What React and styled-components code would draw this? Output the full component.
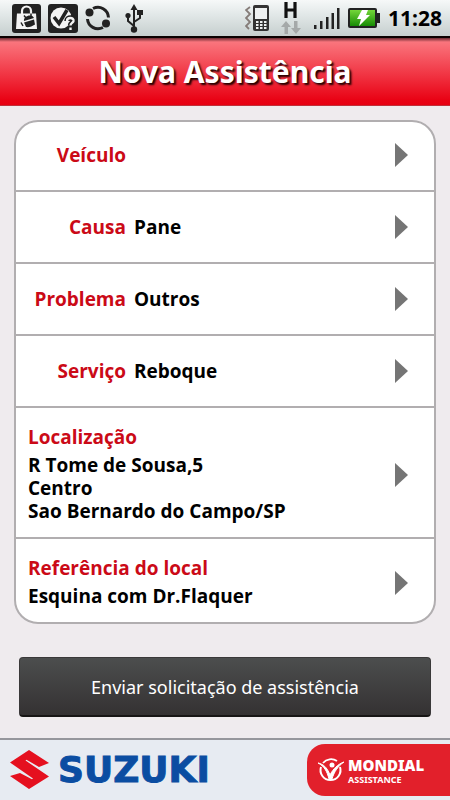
import React from "react";
import styled, {createGlobalStyle} from "styled-components";

const GlobalStyle = createGlobalStyle`
  * {
    box-sizing: border-box;
  }

  body {
    margin: 0;
    background: #EFEBEE;
    font-family: "Noto Sans", "Open Sans", sans-serif;
  }
`

const Screen = styled.div`
  min-height: 100vh;
  display: flex;
  flex-direction: column;
`
const StatusBar = styled.div`
  height: 38px;
  padding: 0 8px 0 12px;
  display: flex;
  align-items: center;
  justify-content: space-between;
  background: linear-gradient(#F6F8F8 0%, #E2E8E8 40%, #C6CFCE 100%);
  border-bottom: 2px solid #0A0000;
`
const StatusGroup = styled.div`
  display: flex;
  align-items: center;
  gap: ${({$gap}) => $gap}px;

  svg {
    display: block;
  }
`
const Clock = styled.time`
  font-size: 21px;
  line-height: 24px;
  font-weight: 700;
  color: #000;
`
const Header = styled.header`
  height: 68px;
  display: flex;
  align-items: center;
  justify-content: center;
  background: linear-gradient(#6A2A31 0px, #FA757D 4px, #F0303F 58%, #E90315 92%, #E60012 100%);
  border-bottom: 1px solid #C0303A;
`
const Title = styled.h1`
  margin: 0;
  font-size: 30px;
  line-height: 36px;
  font-weight: 700;
  color: #FFF;
  text-shadow: 2px 2px 2px #200;
`
const Main = styled.main`
  flex: 1;
  padding: 14px 14px 20px;
`
const Card = styled.div`
  background: #FFF;
  border: 2px solid #B1AEB0;
  border-radius: 24px;
  overflow: hidden;
`
const Row = styled.button`
  width: 100%;
  display: flex;
  align-items: center;
  justify-content: space-between;
  border: 0;
  border-bottom: 2px solid #B1AEB0;
  background: none;
  font: 700 19px/23px "Open Sans", "Noto Sans", sans-serif;
  color: #000;
  text-align: left;
  padding: ${({$stacked}) => $stacked ? '18px 26px 14px 12px' : '23px 26px 23px 0'};

  &:first-child {
    padding-top: 21px;
  }

  &:last-child {
    border-bottom: 0;
  }
`
const Field = styled.span`
  display: flex;
  flex-direction: ${({$stacked}) => $stacked ? 'column' : 'row'};
  gap: ${({$stacked}) => $stacked ? 5 : 8}px;
`
const Label = styled.span`
  color: #CB0A17;
  width: ${({$stacked}) => $stacked ? 'auto' : '110px'};
  text-align: ${({$stacked}) => $stacked ? 'left' : 'right'};
`
const Value = styled.span`
  white-space: pre-line;
`
const SendButton = styled.button`
  display: block;
  width: calc(100% - 10px);
  height: 60px;
  margin: 33px auto 0;
  border: 1px solid #3A3839;
  border-bottom: 2px solid #171515;
  border-radius: 4px;
  background: linear-gradient(#4C4E4E, #343132);
  color: #FFF;
  font: 400 18px/24px "Noto Sans", "Open Sans", sans-serif;
`
const Footer = styled.footer`
  height: 62px;
  display: flex;
  align-items: center;
  justify-content: space-between;
  padding-left: 10px;
  border-top: 2px solid #96969C;
  background: #E7EBF2;
`
const Suzuki = styled.div`
  display: flex;
  align-items: center;
  gap: 8px;
`
const SuzukiName = styled.span`
  font: 700 36px/38px "DejaVu Sans", sans-serif;
  color: #0B4DA2;
  -webkit-text-stroke: 1px #0B4DA2;
`
const Mondial = styled.div`
  width: 143px;
  height: 52px;
  display: flex;
  align-items: center;
  gap: 2px;
  padding: 2px 0 0 10px;
  border-radius: 18px 0 0 18px;
  background: #E2202B;
  color: #FFF;
`
const MondialName = styled.div`
  font-size: 15px;
  line-height: 18px;
  font-weight: 900;
`
const MondialSub = styled.div`
  font-size: 9px;
  line-height: 12px;
  font-weight: 700;
`

const MarketIcon = () => <svg width="29" height="29" viewBox="0 0 29 29">
  <rect width="29" height="29" rx="3" fill="#222"/>
  <path d="M10 10V7a4.500 4.500 0 0 1 9 0v3" fill="none" stroke="#F4F4F4" strokeWidth="2.200"/>
  <path d="M5 9.500h19l1 15.500H4z" fill="#F4F4F4"/>
  <path d="M12 17c-1-5 8-8 10-3zM12 18.500l10-3 1 5c-3 2-6 3-9 2.500z" fill="#222"/>
  <path d="M12 11.500l2 2.500M19 9.500v2.500M9 18.500l2 3.500" stroke="#222" strokeWidth="1.500"/>
</svg>

const CheckIcon = () => <svg width="30" height="29" viewBox="0 0 30 29">
  <rect width="30" height="29" rx="3" fill="#222"/>
  <circle cx="13" cy="14" r="10.500" fill="#F4F4F4"/>
  <path d="M6 13l5 6.500L19 6" fill="none" stroke="#222" strokeWidth="3.500"/>
  <path d="M19 17c0-4 7-4 6.500 0-.300 2-3 2-3 4.500M22.500 23.500V26" fill="none" stroke="#222" strokeWidth="5.500"/>
  <path d="M19 17c0-4 7-4 6.500 0-.300 2-3 2-3 4.500M22.500 23.500V26" fill="none" stroke="#F4F4F4" strokeWidth="2.400"/>
</svg>

const SyncIcon = () => <svg width="26" height="26" viewBox="0 0 26 26" fill="none" stroke="#222" strokeWidth="3">
  <path d="M8 3.500c7-3.500 15 1 15.500 9M18 22.500C11 26 3 21.500 2.500 14"/>
  <circle cx="4.500" cy="7.500" r="4" fill="#222" stroke="none"/>
  <circle cx="21" cy="18.500" r="4" fill="#222" stroke="none"/>
</svg>

const UsbIcon = () => <svg width="32" height="29" viewBox="-7 0 32 29" fill="none" stroke="#222" strokeWidth="2">
  <path d="M9 4v21M9 22l-6-5v-5M9 18l6-4v-4"/>
  <path d="M9 0l3.500 6h-7z" fill="#222" stroke="none"/>
  <circle cx="9" cy="25.500" r="3.200" fill="#222" stroke="none"/>
  <circle cx="3" cy="11.500" r="2.600" fill="#222" stroke="none"/>
  <path d="M12 6h6v5h-6z" fill="#222" stroke="none"/>
</svg>

const VibrateIcon = () => <svg width="28" height="26" viewBox="0 0 28 26">
  <path d="M5 2L1 5l4 4-4 4 4 4-4 4 3 3" fill="none" stroke="#857C78" strokeWidth="1.800"/>
  <rect x="8" y="0" width="16" height="26" rx="2" fill="#333"/>
  <path d="M10 3h12v11H10z" fill="#EEF1F1"/>
  <path d="M11 16h2.500v2H11zM15 16h2.500v2H15zM19 16h2.500v2H19zM11 19h2.500v2H11zM15 19h2.500v2H15zM19 19h2.500v2H19zM11 22h2.500v2H11zM15 22h2.500v2H15zM19 22h2.500v2H19z" fill="#EEF1F1"/>
</svg>

const DataIcon = () => <svg width="25" height="32" viewBox="0 0 25 32">
  <path d="M5 0v16M14 0v16M5 8h9" fill="none" stroke="#111" strokeWidth="3.200"/>
  <path d="M5 19l5 6H7v7H3.500v-7H0zM15 32l-5-6h3v-7h3.500v7H20z" fill="#A5A9A9"/>
</svg>

const SignalIcon = () => <svg width="26" height="21" viewBox="0 0 26 21">
  <path d="M0 17h2.500v4H0zM6 13h2.500v8H6zM12 9h2.500v12H12zM17.500 5H20v16h-2.500zM23 0h2.500v21H23z" fill="#222"/>
</svg>

const BatteryIcon = () => <svg width="32" height="20" viewBox="0 0 32 20">
  <defs>
    <linearGradient id="charge" x1="0" y1="0" x2="0" y2="1">
      <stop offset="0" stopColor="#74D63A"/>
      <stop offset="1" stopColor="#168C04"/>
    </linearGradient>
  </defs>
  <rect width="29" height="20" rx="2" fill="#222"/>
  <path d="M29 5h3v10h-3z" fill="#222"/>
  <path d="M2 2h25v16H2z" fill="url(#charge)"/>
  <path d="M14 2h6l-2 5h4L11 18l2-7H9z" fill="#FFF"/>
</svg>

const Arrow = () => <svg width="13" height="24" viewBox="0 0 13 24">
  <path d="M0 0l13 12L0 24z" fill="#757575"/>
</svg>

const SuzukiIcon = () => <svg width="40" height="40" viewBox="0 0 40 40">
  <path d="M19 0L0 12.500 23 28.500l-1 .800L10 23 0 26l19 13 20-12.500L15.500 10.500l1-.800L29 17l10-4z" fill="#E5101F"/>
</svg>

const MondialIcon = () => <svg width="29" height="26" viewBox="0 0 29 26" fill="none" stroke="#FFF">
  <path d="M4 9a10 10 0 1 0 19 0" strokeWidth="2"/>
  <path d="M6 5a10.500 10.500 0 0 1 14-2" strokeWidth="1.800"/>
  <path d="M1 5c5 1 9 4 12 12C16 11 21 6 27 4c-6 4-10 10-12 17h-3C10 13 7 8 1 5z" fill="#FFF" strokeWidth="1"/>
  <circle cx="15" cy="7" r="2.500" fill="#FFF" stroke="none"/>
</svg>

const fields = [
  {label: 'Veículo', value: ''},
  {label: 'Causa', value: 'Pane'},
  {label: 'Problema', value: 'Outros'},
  {label: 'Serviço', value: 'Reboque'},
  {label: 'Localização', value: 'R Tome de Sousa,5\nCentro\nSao Bernardo do Campo/SP', stacked: true},
  {label: 'Referência do local', value: 'Esquina com Dr.Flaquer', stacked: true},
]

export default function App() {
  return <Screen>
    <GlobalStyle/>
    <StatusBar>
      <StatusGroup $gap={7}>
        <MarketIcon/>
        <CheckIcon/>
        <SyncIcon/>
        <UsbIcon/>
      </StatusGroup>
      <StatusGroup $gap={8}>
        <VibrateIcon/>
        <DataIcon/>
        <SignalIcon/>
        <BatteryIcon/>
        <Clock>11:28</Clock>
      </StatusGroup>
    </StatusBar>
    <Header>
      <Title>Nova Assistência</Title>
    </Header>
    <Main>
      <Card>
        {fields.map(({label, value, stacked}) => <Row key={label} type="button" $stacked={stacked}>
          <Field $stacked={stacked}>
            <Label $stacked={stacked}>{label}</Label>
            <Value>{value}</Value>
          </Field>
          <Arrow/>
        </Row>)}
      </Card>
      <SendButton type="button">Enviar solicitação de assistência</SendButton>
    </Main>
    <Footer>
      <Suzuki>
        <SuzukiIcon/>
        <SuzukiName>SUZUKI</SuzukiName>
      </Suzuki>
      <Mondial>
        <MondialIcon/>
        <div>
          <MondialName>MONDIAL</MondialName>
          <MondialSub>ASSISTANCE</MondialSub>
        </div>
      </Mondial>
    </Footer>
  </Screen>
}
